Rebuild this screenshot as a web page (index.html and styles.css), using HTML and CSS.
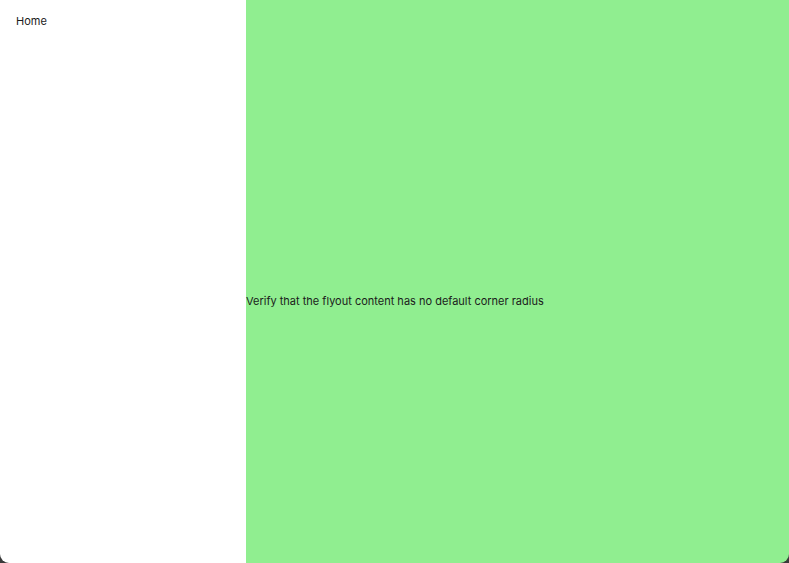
FILE: index.html
```html
<!DOCTYPE html>
<html>
<head>
<meta charset="utf-8">
<link rel="stylesheet" href="styles.css">
</head>
<body>
<div class="window">
  <nav class="flyout">
    <div class="item">Home</div>
  </nav>
  <main class="content">
    <div class="msg">Verify that the flyout content has no default corner radius</div>
  </main>
</div>
</body>
</html>
```
FILE: styles.css
```css
html, body {
  margin: 0;
  padding: 0;
  height: 100%;
  background: #3a3a3a;
}
.window {
  display: flex;
  height: 563px;
  border-radius: 0 0 9px 9px;
  overflow: hidden;
  font-family: Inter, "Noto Sans", sans-serif;
  font-size: 11px;
  color: #1b1b1b;
}
.flyout {
  width: 246px;
  flex: none;
  background: #ffffff;
}
.item {
  padding: 13px 16px;
  line-height: 16px;
}
.content {
  flex: 1;
  background: #90ee90;
  display: flex;
  align-items: center;
  padding-top: 38px;
}
.msg {
  line-height: 16px;
}
```
